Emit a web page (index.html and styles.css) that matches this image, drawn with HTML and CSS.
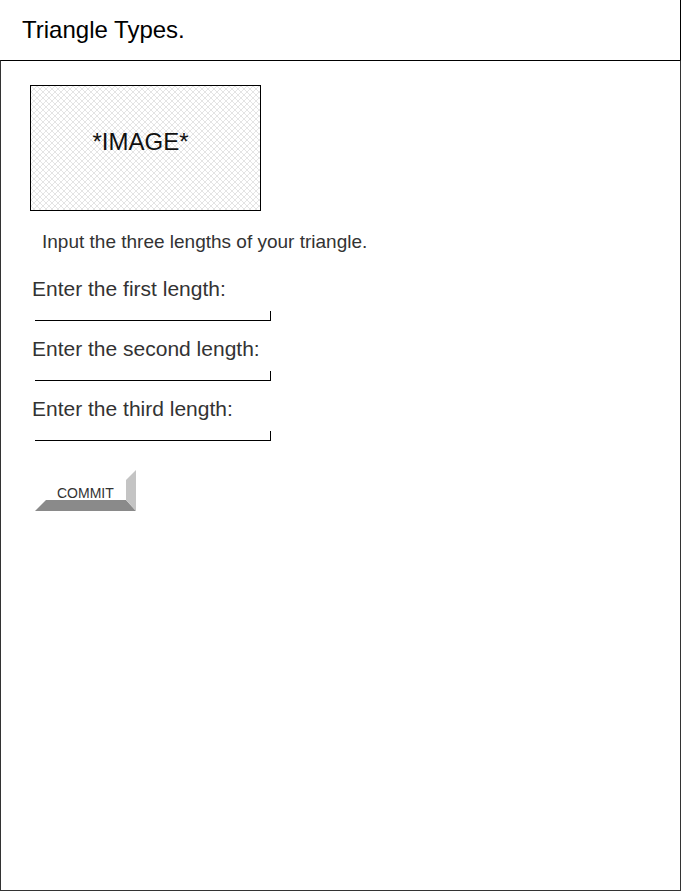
FILE: index.html
```html
<!DOCTYPE html>
<html>
<head>
<meta charset="utf-8">
<link rel="stylesheet" href="styles.css">
</head>
<body>
<header class="header">
  <h1 class="title">Triangle Types.</h1>
</header>
<main class="frame">
  <div class="image-box">*IMAGE*</div>
  <p class="intro">Input the three lengths of your triangle.</p>
  <div class="field">
    <label class="label">Enter the first length:</label>
    <div class="line"></div>
  </div>
  <div class="field">
    <label class="label">Enter the second length:</label>
    <div class="line"></div>
  </div>
  <div class="field">
    <label class="label">Enter the third length:</label>
    <div class="line"></div>
  </div>
  <div class="commit"><span class="commit-text">COMMIT</span></div>
</main>
</body>
</html>
```
FILE: styles.css
```css
html, body {
  margin: 0;
  padding: 0;
  background: #fff;
}
body {
  font-family: "Liberation Sans", Arial, sans-serif;
  width: 681px;
}
.header {
  height: 60px;
  box-sizing: border-box;
  border-right: 1px solid #000;
  display: flex;
  align-items: center;
  padding-left: 22px;
}
.title {
  margin: 0;
  font-weight: normal;
  font-size: 24px;
  color: #000;
  padding-bottom: 1px;
}
.frame {
  box-sizing: border-box;
  height: 831px;
  border: 1px solid #333;
  border-top-color: #000;
  padding: 24px 0 0 29px;
  display: flex;
  flex-direction: column;
  align-items: flex-start;
}
.image-box {
  width: 231px;
  height: 126px;
  box-sizing: border-box;
  border: 1px solid #000;
  background-color: #fff;
  background-image:
    linear-gradient(45deg, transparent 42%, #e4e4e4 42%, #e4e4e4 58%, transparent 58%),
    linear-gradient(-45deg, transparent 42%, #e4e4e4 42%, #e4e4e4 58%, transparent 58%);
  background-size: 6px 6px;
  display: flex;
  align-items: center;
  justify-content: center;
  font-size: 24px;
  color: #111;
  padding-bottom: 12px;
  padding-right: 10px;
}
.intro {
  margin: 20px 0 0 12px;
  font-size: 19px;
  color: #333;
  line-height: 22px;
}
.field {
  margin-top: 16px;
  display: flex;
  flex-direction: column;
}
.intro + .field {
  margin-top: 24px;
}
.label {
  font-size: 21px;
  color: #333;
  line-height: 24px;
  margin-left: 2px;
}
.line {
  margin: 10px 0 0 5px;
  width: 235px;
  height: 9px;
  border-bottom: 1px solid #000;
  border-right: 1px solid #000;
}
.commit {
  position: relative;
  margin: 29px 0 0 5px;
  width: 101px;
  height: 41px;
}
.commit::before {
  content: "";
  position: absolute;
  left: 0;
  bottom: 0;
  width: 101px;
  height: 11px;
  background: #8a8a8a;
  clip-path: polygon(11px 0, 91px 0, 101px 100%, 0 100%);
}
.commit::after {
  content: "";
  position: absolute;
  right: 0;
  top: 0;
  width: 10px;
  height: 41px;
  background: #c4c4c4;
  clip-path: polygon(0 10px, 100% 0, 100% 100%, 0 30px);
}
.commit-text {
  position: absolute;
  left: 22px;
  top: 15px;
  font-size: 14px;
  color: #333;
}
```
